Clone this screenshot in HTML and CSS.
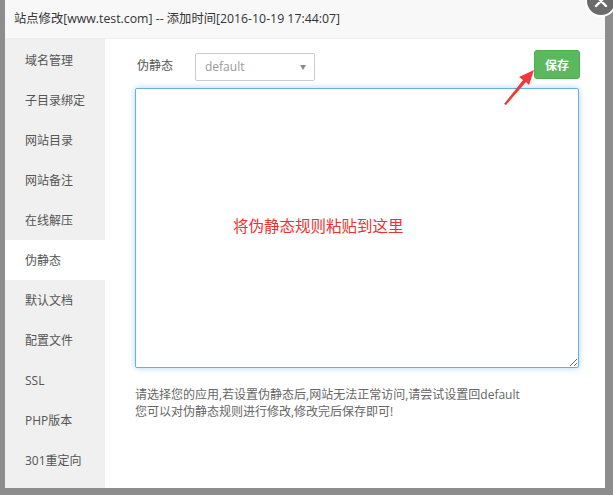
FILE: index.html
```html
<!DOCTYPE html>
<html lang="zh-CN">
<head>
    <meta charset="UTF-8">
    <title>站点修改</title>
    <link rel="stylesheet" href="styles.css">
</head>
<body>
    <div class="layer">
        <div class="layer-title">站点修改[www.test.com] -- 添加时间[2016-10-19 17:44:07]</div>
        <a class="layer-close" href="#">
            <svg width="28" height="28" viewBox="0 0 28 28">
                <path d="M9 9 L19 19 M19 9 L9 19" stroke="#fff" stroke-width="2.4" stroke-linecap="round"/>
            </svg>
        </a>
        <div class="layer-body">
            <!-- 左侧菜单 -->
            <ul class="side-menu">
                <li>域名管理</li>
                <li>子目录绑定</li>
                <li>网站目录</li>
                <li>网站备注</li>
                <li>在线解压</li>
                <li class="active">伪静态</li>
                <li>默认文档</li>
                <li>配置文件</li>
                <li>SSL</li>
                <li>PHP版本</li>
                <li>301重定向</li>
            </ul>

            <div class="panel">
                <div class="panel-row">
                    <span class="panel-label">伪静态</span>
                    <div class="select-box">
                        <span>default</span>
                        <span class="caret">▼</span>
                    </div>
                    <button class="btn-save">保存</button>
                </div>
                <div class="editor">
                    <textarea class="rewrite-text"></textarea>
                    <span class="editor-note">将伪静态规则粘贴到这里</span>
                </div>
                <ul class="help">
                    <li>请选择您的应用,若设置伪静态后,网站无法正常访问,请尝试设置回default</li>
                    <li>您可以对伪静态规则进行修改,修改完后保存即可!</li>
                </ul>
                <svg class="arrow" width="40" height="40" viewBox="0 0 40 40">
                    <polygon points="3,37 22,13 18,10 33,3 28,18 25,15 5,38" fill="#f2383a"/>
                </svg>
            </div>
        </div>
    </div>
</body>
</html>
```

FILE: styles.css
```css
/* General */
body {
    margin: 0;
    padding: 0 8px 7px 5px;
    background: #8d8d8d;
    font-family: "Open Sans", "Noto Sans CJK SC", sans-serif;
    overflow: hidden;
}

ul {
    list-style: none;
    margin: 0;
    padding: 0;
}

.layer {
    position: relative;
    width: 600px;
    height: 488px;
    background: #fff;
}

.layer-title {
    height: 38px;
    line-height: 38px;
    padding-left: 9px;
    font-size: 12.3px;
    color: #333;
    background: #f8f8f8;
    border-bottom: 1px solid #eee;
    white-space: nowrap;
}

.layer-close {
    position: absolute;
    right: -12px;
    top: -15px;
    width: 28px;
    height: 28px;
    border-radius: 50%;
    background: #6b6b6b;
    border: 2px solid #fff;
}

.layer-close svg {
    display: block;
}

.layer-body {
    display: flex;
    height: 449px;
}

/* Side menu */
.side-menu {
    width: 100px;
    padding-top: 1px;
    background: #f0f0f0;
}

.side-menu li {
    height: 40px;
    line-height: 42px;
    padding-left: 20px;
    font-size: 12px;
    color: #555;
}

.side-menu li.active {
    background: #fff;
}

/* Panel */
.panel {
    position: relative;
    flex: 1;
    padding: 10px 25px 0 30px;
}

.panel-row {
    display: flex;
    align-items: center;
    height: 31px;
}

.panel-label {
    width: 58px;
    padding-left: 2px;
    font-size: 12px;
    color: #555;
}

.select-box {
    position: relative;
    width: 120px;
    height: 28px;
    margin-top: 4px;
    box-sizing: border-box;
    border: 1px solid #ccc;
    border-radius: 2px;
    padding-left: 9px;
    line-height: 26px;
    font-size: 12px;
    color: #999;
}

.select-box .caret {
    position: absolute;
    right: 8px;
    top: 0;
    font-size: 6px;
    color: #888;
}

.btn-save {
    margin-left: auto;
    width: 46px;
    height: 29px;
    padding: 0;
    border: 1px solid #4cae4c;
    border-radius: 3px;
    background: #5cb85c;
    color: #fff;
    font-family: inherit;
    font-size: 12px;
    font-weight: bold;
}

.editor {
    position: relative;
    margin-top: 8px;
}

.rewrite-text {
    display: block;
    width: 444px;
    height: 280px;
    margin: 0;
    box-sizing: border-box;
    border: 1px solid #66afe9;
    border-radius: 2px;
    box-shadow: 0 0 6px rgba(102, 175, 233, 0.5);
    outline: none;
}

.editor-note {
    position: absolute;
    left: 98px;
    top: 126px;
    font-size: 15.5px;
    color: #f03030;
}

.help {
    margin-top: 18px;
    font-size: 12px;
    line-height: 17px;
    color: #666;
}

.arrow {
    position: absolute;
    left: 396px;
    top: 28px;
}
```
